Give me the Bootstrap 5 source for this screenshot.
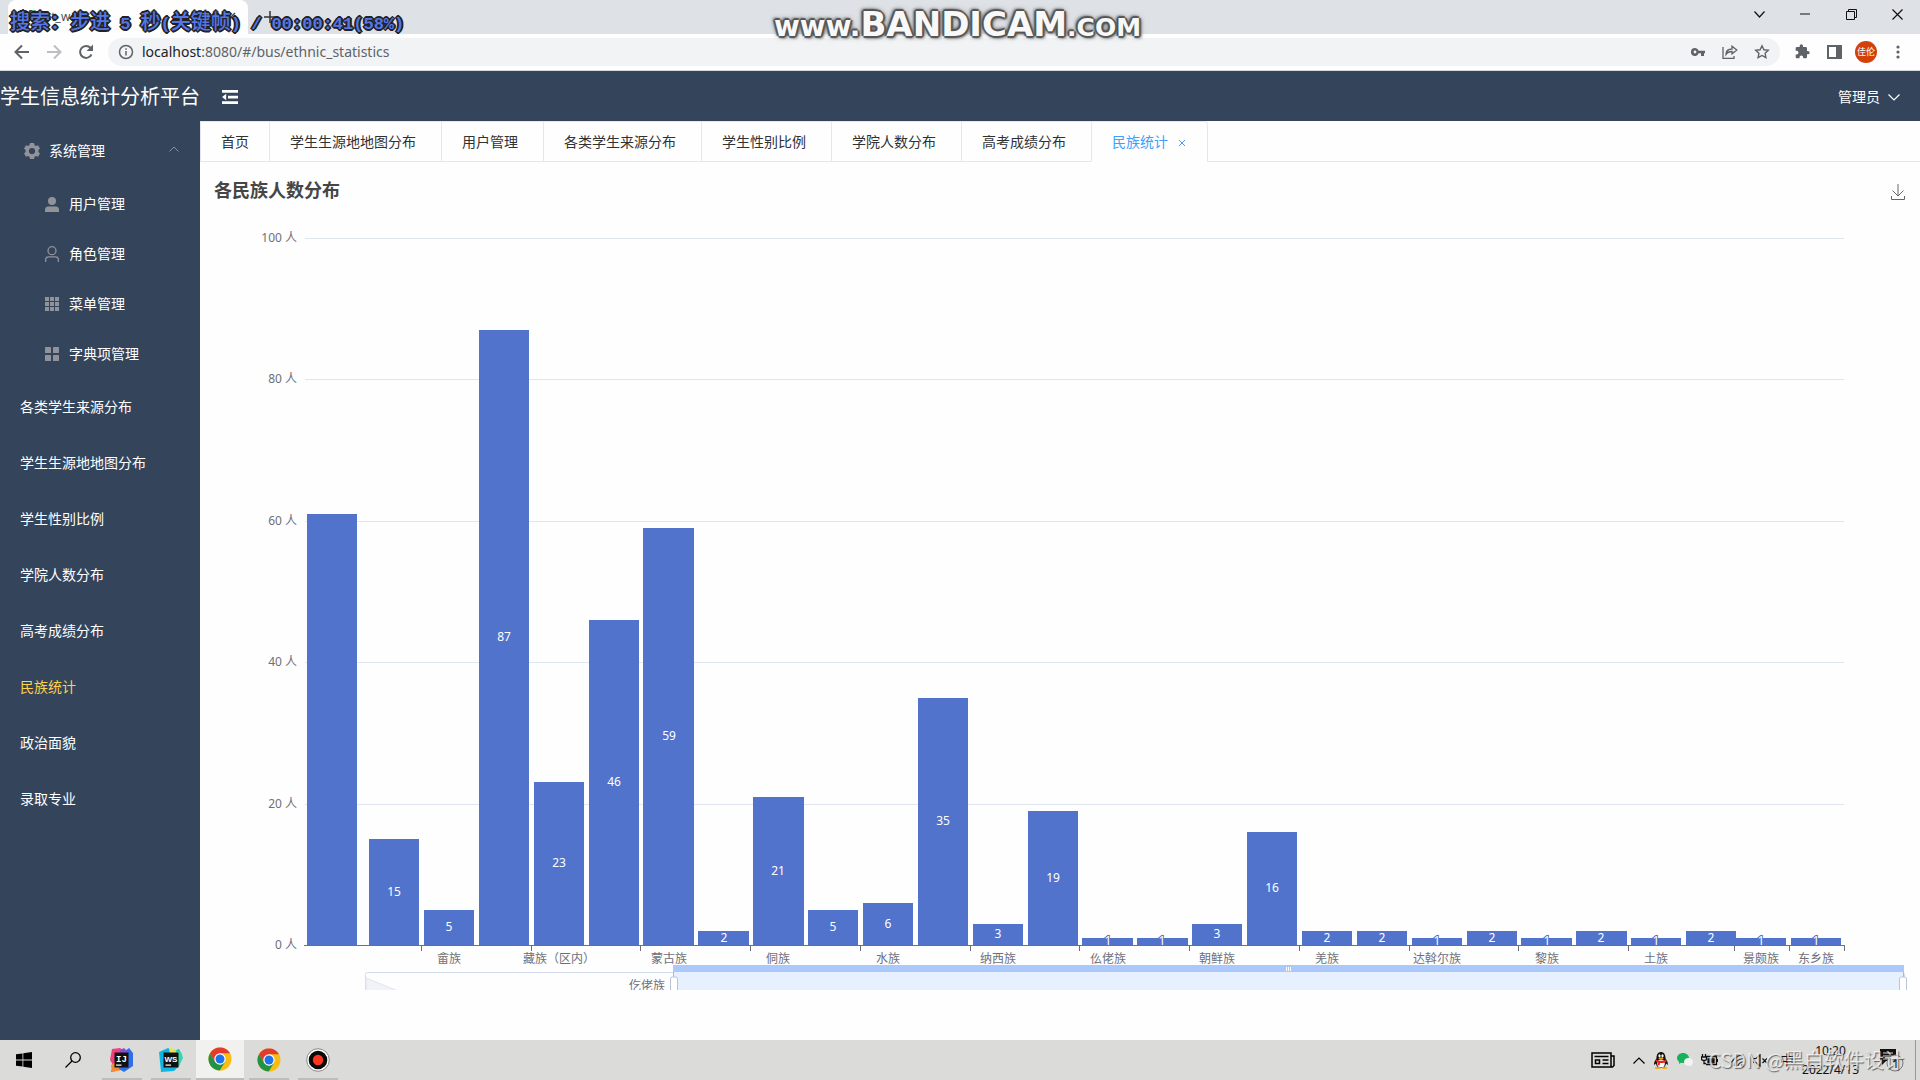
<!DOCTYPE html>
<html lang="zh-CN">
<head>
<meta charset="utf-8">
<meta name="viewport" content="width=device-width, initial-scale=1">
<title>学生信息统计分析平台</title>
<link href="https://cdn.jsdelivr.net/npm/bootstrap@5.3.0/dist/css/bootstrap.min.css" rel="stylesheet">
<style>
body{font-family:"Open Sans","Noto Sans CJK SC",sans-serif;font-size:14px;line-height:20px;background:#fefefe;color:#303133}
svg{display:block;flex:none}
button{background:none;border:0;padding:0;color:inherit}
a{color:inherit;text-decoration:none}
.titlebar{height:34px;background:#dee1e6}
.browser-tab{width:240px;margin-left:8px;background:#fefefe;border-radius:8px 8px 0 0;padding:0 12px;font-size:12px;color:#45494d}
.win-btn{width:46px;height:28px;color:#111}
.toolbar{height:37px;border-bottom:1px solid #d3dadd;background:#fefefe;color:#5f6368}
.tool-btn{width:32px;height:32px}
.nav-tools{padding-left:6px}
.page-tools{padding:0 6px}
.address{height:28px;border-radius:14px;background:#f1f3f4;padding:0 2px 0 10px;margin-left:6px}
.url{font-family:"Noto Sans",sans-serif;font-size:14px;color:#5f6368}
.url b{font-weight:400;color:#202124}
.avatar{width:22px;height:22px;border-radius:50%;background:#d2410c;color:#fff;font-size:9px;line-height:22px;text-align:center}
.osd{position:absolute;left:10px;top:7px;font:bold 17px/28px "Liberation Mono",monospace;color:#5577e6;white-space:pre;text-shadow:1px 1px #222,-1px 1px #222,1px -1px #222,-1px -1px #222,0 2px #222,2px 0 #222,-2px 0 #222,0 -2px #222;pointer-events:none}
.osd span{font:500 20px/28px "Noto Sans CJK SC",sans-serif}
.bandi{position:absolute;left:774px;top:6px;height:36px;font:bold 28px/36px "DejaVu Sans",sans-serif;color:#f8f8f8;text-shadow:2px 0 1px #555,-2px 0 1px #555,0 2px 1px #555,0 -2px 1px #555,1px 1px #555,-1px -1px #555,2px 2px 3px #666,-2px -2px 3px #777,0 0 6px #777;pointer-events:none;white-space:nowrap}
.bandi .big{font-size:34px}
.bandi .sm{font-size:25px}
.app-header{height:50px;background:#34445a;color:#fff;padding-top:2px}
.brand{width:200px;font-size:20px;line-height:30px;white-space:nowrap}
.fold{margin-left:22px}
.side{width:200px;background:#34445a;color:#fff;padding-top:2px}
.side a,.side .sub-title{display:flex;align-items:center;height:56px;padding:0 20px;width:100%;text-align:left}
.side .sub a{height:50px;padding-left:40px}
.side .ico{width:24px;margin-right:5px;display:flex;justify-content:center;color:#909399}
.side a.current{color:#ffd04b}
.tabs{height:41px}
.tabs a{border-left:1px solid #e4e7ed;border-top:1px solid #e4e7ed;border-bottom:1px solid #e4e7ed;padding:0 25px 0 20px;height:41px;line-height:40px;white-space:nowrap}
.tabs a:first-child{padding-right:20px}
.tabs a.current{color:#409eff;border-right:1px solid #e4e7ed;border-bottom-color:#fefefe;border-radius:0 4px 0 0;padding-right:18px;display:flex;align-items:center;gap:7px}
.tabs .rest{border-bottom:1px solid #e4e7ed}
.chart-head{height:58px;padding:15px 15px 0 14px}
.chart-title{font-size:18px;line-height:26px;font-weight:700;color:#464646;margin:0}
.save{padding-top:7px}
#chart{height:820px;width:100%}
#chart text{font-family:"Noto Sans","Noto Sans CJK SC",sans-serif;font-size:12px}
.taskbar{height:40px;background:#dbdbda;color:#111}
.apps{gap:1px}
.task{width:48px;height:40px;display:flex;align-items:center;justify-content:center}
.task.open{background:linear-gradient(#bdbdbd,#bdbdbd) center bottom/40px 2px no-repeat}
.task.front{background:#f1f1f0;border-bottom:2px solid #bdbdbd}
.tray{padding-right:4px}
.news{margin-right:18px}
.clock{font-family:"Noto Sans",sans-serif;font-size:12px;line-height:19px;text-align:center}
.notice{margin:0 10px 0 16px}
.show-desktop{height:40px;border-left:1px solid #999}
.csdn{position:absolute;right:16px;bottom:5px;font:20px/30px "Noto Sans CJK SC",sans-serif;color:rgba(250,250,250,.75);text-shadow:1px 1px 1px rgba(60,60,60,.75);pointer-events:none;white-space:nowrap}
</style>
<script src="https://cdn.jsdelivr.net/npm/bootstrap@5.3.0/dist/js/bootstrap.bundle.min.js"></script>
</head>
<body class="vh-100 d-flex flex-column overflow-hidden position-relative">

<div class="titlebar d-flex">
  <div class="browser-tab d-flex align-items-center">
    <svg width="16" height="14" viewBox="0 0 16 14"><path d="M0 0h3.500L8 7.500 12.500 0H16L8 14z" fill="#41b883"/><path d="M3.500 0H6.500L8 2.800 9.500 0h3L8 7.500z" fill="#35495e"/></svg>
    <span class="ms-2 flex-grow-1">bt_web</span>
    <button aria-label="关闭标签页"><svg width="10" height="10" viewBox="0 0 10 10" stroke="#444" stroke-width="1.500"><path d="M1 1l8 8M9 1l-8 8"/></svg></button>
  </div>
  <button class="ms-3 text-dark" aria-label="新标签页"><svg width="12" height="12" viewBox="0 0 12 12" stroke="#333" stroke-width="1.500"><path d="M6 0v12M0 6h12"/></svg></button>
  <div class="ms-auto d-flex">
    <button class="win-btn d-flex align-items-center justify-content-center" aria-label="搜索标签页"><svg width="11" height="7" viewBox="0 0 11 7" fill="none" stroke="currentColor" stroke-width="1.200"><path d="M.5.5l5 5.500 5-5.500"/></svg></button>
    <button class="win-btn d-flex align-items-center justify-content-center" aria-label="最小化"><svg width="10" height="2" viewBox="0 0 10 2"><path d="M0 .5h10v1H0z" fill="currentColor"/></svg></button>
    <button class="win-btn d-flex align-items-center justify-content-center" aria-label="还原"><svg width="11" height="11" viewBox="0 0 11 11" fill="none" stroke="currentColor"><path d="M.5 2.500h8v8h-8zM2.500 2.500v-2h8v8h-2"/></svg></button>
    <button class="win-btn d-flex align-items-center justify-content-center" aria-label="关闭"><svg width="11" height="11" viewBox="0 0 11 11" stroke="currentColor" stroke-width="1.200"><path d="M.5.5l10 10M10.500.5l-10 10"/></svg></button>
  </div>
</div>

<div class="toolbar d-flex align-items-center">
  <div class="nav-tools d-flex">
    <button class="tool-btn d-flex align-items-center justify-content-center" aria-label="后退"><svg width="16" height="16" viewBox="0 0 16 16" fill="none" stroke="currentColor" stroke-width="2"><path d="M15 8H2M8 1.500L1.500 8 8 14.500"/></svg></button>
    <button class="tool-btn d-flex align-items-center justify-content-center" aria-label="前进"><svg width="16" height="16" viewBox="0 0 16 16" fill="none" stroke="#bcbec1" stroke-width="2"><path d="M1 8h13M8 1.500L14.500 8 8 14.500"/></svg></button>
    <button class="tool-btn d-flex align-items-center justify-content-center" aria-label="重新加载"><svg width="16" height="16" viewBox="0 0 16 16" fill="none" stroke="currentColor" stroke-width="2"><path d="M13.500 10.500A6 6 0 1 1 12.500 3.800L14 5.500"/><path d="M15 .5v6.500H8.500z" fill="currentColor" stroke="none"/></svg></button>
  </div>
  <div class="address flex-grow-1 d-flex align-items-center">
    <svg width="16" height="16" viewBox="0 0 16 16" fill="none" stroke="currentColor" stroke-width="1.500"><circle cx="8" cy="8" r="6.500"/><path d="M8 7v4.500M8 4.200v1.600"/></svg>
    <a class="url flex-grow-1 ms-2" href="#/bus/ethnic_statistics"><b>localhost</b>:8080/#/bus/ethnic_statistics</a>
    <button class="tool-btn d-flex align-items-center justify-content-center" aria-label="密码"><svg width="14" height="8" viewBox="0 0 14 8" fill="currentColor"><path fill-rule="evenodd" d="M4 0a4 4 0 0 1 3.700 2.700H14v2.600h-1V8h-3V5.300H7.700A4 4 0 1 1 4 0zm0 2.600a1.400 1.400 0 1 0 0 2.800 1.400 1.400 0 0 0 0-2.800z"/></svg></button>
    <button class="tool-btn d-flex align-items-center justify-content-center" aria-label="分享"><svg width="16" height="14" viewBox="0 0 16 14" fill="none" stroke="currentColor" stroke-width="1.300"><path d="M1 2v11.300h11V11M4 9.500C4 6 6.500 4 10 4V1.200L14.800 5 10 8.800V6.500C7 6.500 5.200 7.500 4 9.500z"/></svg></button>
    <button class="tool-btn d-flex align-items-center justify-content-center" aria-label="收藏"><svg width="16" height="16" viewBox="0 0 16 16" fill="none" stroke="currentColor" stroke-width="1.400"><path d="M8 1.800l1.900 4 4.400.5-3.200 3 .8 4.400L8 11.500l-3.900 2.200.8-4.400-3.200-3 4.400-.5z"/></svg></button>
  </div>
  <div class="page-tools d-flex align-items-center">
    <button class="tool-btn d-flex align-items-center justify-content-center" aria-label="扩展程序"><svg width="16" height="16" viewBox="0 0 24 24" fill="currentColor"><path d="M21 10.500h-1.500V6.500c0-1.100-.9-2-2-2h-4V3a2.500 2.500 0 0 0-5 0v1.500h-4c-1.100 0-2 .9-2 2v3.800H4a2.700 2.700 0 0 1 0 5.400H2.500v3.800c0 1.100.9 2 2 2h3.800V20a2.700 2.700 0 0 1 5.400 0v1.500h3.800c1.100 0 2-.9 2-2v-4H21a2.500 2.500 0 0 0 0-5z"/></svg></button>
    <button class="tool-btn d-flex align-items-center justify-content-center" aria-label="侧边栏"><svg width="15" height="14" viewBox="0 0 15 14"><path d="M1 1h13v12H1z" fill="none" stroke="currentColor" stroke-width="2"/><path d="M9 0h6v14H9z" fill="currentColor"/></svg></button>
    <button class="tool-btn d-flex align-items-center justify-content-center" aria-label="个人资料"><span class="avatar">佳伦</span></button>
    <button class="tool-btn d-flex align-items-center justify-content-center" aria-label="菜单"><svg width="4" height="14" viewBox="0 0 4 14" fill="currentColor"><circle cx="2" cy="2" r="1.600"/><circle cx="2" cy="7" r="1.600"/><circle cx="2" cy="12" r="1.600"/></svg></button>
  </div>
</div>

<header class="app-header d-flex align-items-center">
  <div class="brand">学生信息统计分析平台</div>
  <button class="fold" aria-label="折叠菜单"><svg width="16" height="14" viewBox="0 0 16 14" fill="#fff"><path d="M0 0h16v2.700H0zM6 5.700h10v2.700H6zM0 11.300h16V14H0zM0 7l4.200-3.200v6.400z"/></svg></button>
  <button class="ms-auto d-flex align-items-center gap-2 me-3" aria-haspopup="true">管理员 <svg class="me-1" width="12" height="7" viewBox="0 0 12 7" fill="none" stroke="#fff" stroke-width="1.200"><path d="M.5.5L6 6 11.500.5"/></svg></button>
</header>

<div class="d-flex flex-grow-1 overflow-hidden">
  <nav class="side flex-shrink-0" aria-label="主菜单">
    <button class="sub-title" aria-expanded="true"><span class="ico"><svg width="16" height="16" viewBox="0 0 16 16" fill="currentColor"><path fill-rule="evenodd" d="M6 0h4l.5 2.100 1.300.8 2.200-.7 2 3.400-1.600 1.500v1.800l1.600 1.500-2 3.400-2.200-.7-1.300.8L10 16H6l-.5-2.100-1.300-.8-2.200.7-2-3.400 1.600-1.500V7.100L0 5.600l2-3.400 2.200.7 1.300-.8zM8 4.900a3.100 3.100 0 1 0 0 6.200 3.100 3.100 0 0 0 0-6.200z"/></svg></span><span class="flex-grow-1">系统管理</span><svg class="mb-1" width="12" height="6" viewBox="0 0 12 6" fill="none" stroke="#8390a0"><path d="M1.500 5.500L6 1l4.500 4.500"/></svg></button>
    <div class="sub">
      <a href="#user"><span class="ico"><svg width="14" height="15" viewBox="0 0 14 15" fill="currentColor"><circle cx="7" cy="4" r="4"/><path d="M0 15v-2.500C0 10.500 1.500 9.500 3 9.500h8c1.500 0 3 1 3 3V15z"/></svg></span>用户管理</a>
      <a href="#role"><span class="ico"><svg width="14" height="16" viewBox="0 0 14 16" fill="none" stroke="currentColor" stroke-width="1.300"><circle cx="7" cy="4.700" r="4"/><path d="M.7 16v-2.500c0-1.500 1.300-2.700 2.800-2.700h7c1.500 0 2.800 1.200 2.800 2.700V16"/></svg></span>角色管理</a>
      <a href="#menu"><span class="ico"><svg width="14" height="14" viewBox="0 0 14 14" fill="currentColor"><path d="M0 0h4v4H0zM5 0h4v4H5zM10 0h4v4h-4zM0 5h4v4H0zM5 5h4v4H5zM10 5h4v4h-4zM0 10h4v4H0zM5 10h4v4H5zM10 10h4v4h-4z"/></svg></span>菜单管理</a>
      <a href="#dict"><span class="ico"><svg width="14" height="14" viewBox="0 0 14 14" fill="currentColor"><rect width="6" height="6" rx=".6"/><rect x="8" width="6" height="6" rx=".6"/><rect y="8" width="6" height="6" rx=".6"/><rect x="8" y="8" width="6" height="6" rx=".6"/></svg></span>字典项管理</a>
    </div>
    <a href="#source">各类学生来源分布</a>
    <a href="#map">学生生源地地图分布</a>
    <a href="#gender">学生性别比例</a>
    <a href="#college">学院人数分布</a>
    <a href="#score">高考成绩分布</a>
    <a href="#ethnic" class="current" aria-current="page">民族统计</a>
    <a href="#political">政治面貌</a>
    <a href="#major">录取专业</a>
  </nav>

  <main class="flex-grow-1 overflow-hidden">
    <div class="tabs d-flex">
      <a href="#home">首页</a><a href="#map">学生生源地地图分布</a><a href="#user">用户管理</a><a href="#source">各类学生来源分布</a><a href="#gender">学生性别比例</a><a href="#college">学院人数分布</a><a href="#score">高考成绩分布</a><a href="#ethnic" class="current">民族统计<svg width="14" height="14" viewBox="0 0 14 14" stroke="#409eff" fill="none"><path d="M4 5l6 6M10 5l-6 6"/></svg></a>
      <div class="rest flex-grow-1"></div>
    </div>
    <div class="chart-head d-flex justify-content-between align-items-start">
      <h1 class="chart-title">各民族人数分布</h1>
      <button class="save" aria-label="保存为图片"><svg width="14" height="16" viewBox="0 0 14 16" fill="none" stroke="#666"><path d="M7 0v12M1.500 6.500L7 12l5.500-5.500M.5 12v3.500h13V12"/></svg></button>
    </div>
    <svg id="chart" role="img" aria-label="各民族人数分布柱状图"></svg>
  </main>
</div>

<footer class="taskbar d-flex align-items-center">
  <div class="apps d-flex">
  <button class="task" aria-label="开始"><svg width="16" height="16" viewBox="0 0 16 16" fill="#000"><path d="M0 2.300L6.500 1.400v6.200H0zM7.300 1.300L16 0v7.600H7.300zM0 8.400h6.500v6.200L0 13.700zM7.300 8.400H16V16l-8.700-1.300z"/></svg></button>
  <button class="task" aria-label="搜索"><svg width="16" height="16" viewBox="0 0 16 16" fill="none" stroke="#000" stroke-width="1.300"><circle cx="10.500" cy="5.500" r="4.800"/><path d="M7 9L.5 15.500"/></svg></button>
  <button class="task open" aria-label="IntelliJ IDEA"><svg width="24" height="24" viewBox="0 0 24 24"><path d="M2 1l8-1 6 4-6 18-9 2 2-7-3-5z" fill="#f0417a"/><path d="M1 17l5-3 5 8-9 2z" fill="#f28c38"/><path d="M15 3l4-3 4 5v13l-9 6-5-3z" fill="#2f6fe8"/><path d="M10 2l4-2 4 4v5h-8z" fill="#8a4fd0"/><path d="M4.500 4.500h14v15h-14z" fill="#111"/><text x="6" y="14" font-family="Liberation Mono" font-weight="bold" font-size="9" fill="#fff">IJ</text><path d="M6 16.500h5.500v1.200H6z" fill="#fff"/></svg></button>
  <button class="task open" aria-label="WebStorm"><svg width="24" height="24" viewBox="0 0 24 24"><path d="M0 4l9-4 6 3 5-2 3 6-3 11-5 5-13 1z" fill="#12b5e0"/><path d="M17 2l5 2 2 6-4 8-6-2z" fill="#36d6b0"/><path d="M10 0l6 1 2 5h-7z" fill="#e5e750"/><path d="M4.500 4.500h15v15h-15z" fill="#111"/><text x="5.500" y="13.500" font-family="Liberation Sans" font-weight="bold" font-size="8" fill="#fff">WS</text><path d="M6.500 16.500H12v1.200H6.500z" fill="#fff"/></svg></button>
  <button class="task front" aria-label="Chrome"><svg width="24" height="24" viewBox="0 0 24 24"><g id="cr"><circle cx="12" cy="12" r="11.500" fill="#f9bc15"/><path d="M2 6.300A11.500 11.500 0 0 1 22 6.300H12L7 15z" fill="#e33b2e"/><path d="M2 6.300L7.100 15l5 2.800-3.300 5.300A11.500 11.500 0 0 1 2 6.300z" fill="#229342"/><path d="M7 15l5 2.500 5-2.600-5.300 8.600-3-.5z" fill="#229342"/><circle cx="12" cy="12" r="5.700" fill="#fff"/><circle cx="12" cy="12" r="4.500" fill="#1f73e8"/></g></svg></button>
  <button class="task open" aria-label="Chrome 第二窗口"><svg width="24" height="24" viewBox="0 0 24 24"><use href="#cr"/></svg></button>
  <button class="task open" aria-label="Bandicam"><svg width="24" height="24" viewBox="0 0 24 24"><circle cx="12" cy="12" r="11.300" fill="#fff" stroke="#888"/><circle cx="12" cy="12" r="9.300" fill="#0a0a0a"/><circle cx="12" cy="12" r="5.200" fill="#fb3521"/></svg></button>
  </div>
  <div class="tray ms-auto d-flex align-items-center">
    <svg class="news" width="24" height="16" viewBox="0 0 24 16" fill="none" stroke="#000" stroke-width="1.500"><path d="M1 1h19v14H1zM20 4h3v9.500L21.500 15H19M3.500 4.500h14M11.500 8h6M11.500 11.500h6"/><path d="M4.500 8h4v3.500h-4z"/></svg>
    <svg class="me-2" width="12" height="7" viewBox="0 0 12 7" fill="none" stroke="#000" stroke-width="1.200"><path d="M.5 6.500L6 1l5.500 5.500"/></svg>
    <svg class="me-2" width="16" height="17" viewBox="0 0 16 17"><path d="M1 13c0-4 2-5 2.500-7C3.500 2 5.500 0 8 0s4.500 2 4.500 6c.5 2 2.500 3 2.500 7l-2-1.500C12.500 15 10 16 8 16s-4.500-1-5-4.500z" fill="#111"/><ellipse cx="8" cy="11.500" rx="3.800" ry="4" fill="#fff"/><path d="M2.800 7.500c3 1.800 7.400 1.800 10.400 0l.3 2.200C11 11 9 11.200 7 11l-.4 2.400-2-.3.200-2.600-2-1z" fill="#e8231c"/><ellipse cx="6.500" cy="3.800" rx="1.100" ry="1.600" fill="#fff"/><ellipse cx="9.500" cy="3.800" rx="1.100" ry="1.600" fill="#fff"/><ellipse cx="8" cy="6.300" rx="2.600" ry=".9" fill="#f6a914"/><ellipse cx="4.500" cy="16" rx="3" ry="1" fill="#f6a914"/><ellipse cx="11.500" cy="16" rx="3" ry="1" fill="#f6a914"/></svg>
    <svg class="me-2" width="16" height="14" viewBox="0 0 16 14"><path d="M6 0c3.300 0 6 2.200 6 5s-2.700 5-6 5l-2-.3L1.800 11l.4-2A4.600 4.600 0 0 1 0 5c0-2.800 2.700-5 6-5z" fill="#16b35a"/><path d="M11.500 5c2.500 0 4.500 1.700 4.500 3.900 0 1.200-.6 2.200-1.600 3l.2 1.500-1.500-.8c-3.400.8-6.100-1.200-6.100-3.700C7 6.700 9 5 11.500 5z" fill="#f3f3f3"/></svg>
    <svg class="me-1" width="17" height="12" viewBox="0 0 17 12" fill="none" stroke="#111" stroke-width="1.300"><path d="M5 2.500h10.500v8H5M16.500 5v3M1.500 0v3M4.500 0v3M.5 3h5v2c0 2-5 2-5 0zM3 6.500v3h2"/><path d="M7 5h6v3.500H7z" fill="#111"/></svg>
    <svg class="ms-2 me-2" width="15" height="13" viewBox="0 0 15 13" fill="none" stroke="#333" stroke-width="1.100"><path d="M1 12C1 6 7 1 13.500 1M4.500 12c0-4 4-7 9-7.500M8 12c0-2 2.500-4 5.500-4.200"/><circle cx="12.500" cy="11.500" r="1" fill="#333"/></svg>
    <svg class="me-2" width="15" height="13" viewBox="0 0 15 13" fill="none" stroke="#111" stroke-width="1.200"><path d="M.5 4.500h2.500L7 1v11L3 8.500H.5zM9.500 4.500l4.500 4.500M14 4.500L9.500 9"/></svg>
    <span class="ms-1 me-1">中</span>
    <div class="clock ms-1"><div>10:20</div><div>2022/4/13</div></div>
    <button class="notice" aria-label="通知"><svg width="30" height="24" viewBox="0 0 30 24"><path d="M5 1h16v12H11l-4 4v-4H5z" fill="#111"/><path d="M8 5h10M8 8h10M8 11h6" stroke="#ddd"/><circle cx="20" cy="15" r="8" fill="#dbdbda" stroke="#777"/><text x="17" y="20" font-family="Open Sans" font-weight="bold" font-size="13" fill="#222">1</text></svg></button>
    <div class="show-desktop"></div>
  </div>
</footer>

<div class="osd"><span>搜索：步进</span> 5 <span>秒</span>(<span>关键帧</span>) / 00:00:41(58%)</div>
<div class="bandi">www.<span class="big">BANDICAM</span><span class="sm">.COM</span></div>
<div class="csdn">CSDN @黑白软件设计</div>

<script>
// Head counts of the evenly spaced bars; names sit under every second one
const values=[5,87,23,46,59,2,21,5,6,35,3,19,1,1,3,16,2,2,1,2,1,2,1,2];
const names={0:'畲族',2:'藏族（区内）',4:'蒙古族',6:'侗族',8:'水族',10:'纳西族',12:'仫佬族',14:'朝鲜族',16:'羌族',18:'达斡尔族',20:'黎族',22:'土族'};
const pitch=54.87, barW=50.3;
const bars=[[107,61,''],[169,15,'']];
values.forEach((v,i)=>bars.push([224+i*pitch,v,names[i]||'']));
bars.push([1536,1,'景颇族'],[1591,1,'东乡族']);
const ticks=[];
for(let i=0;i<12;i++)ticks.push(221+i*2*pitch);
ticks.push(1534,1589,1644);
const svg=document.getElementById('chart'), base=725, unit=7.07;
function draw(){
  const k=svg.clientWidth/1720, X=x=>Math.round(x*k);
  let s=`<defs><clipPath id="cut"><rect width="100%" height="${base+45}"/></clipPath></defs>`;
  for(let v=0;v<=100;v+=20){
    const y=Math.round(base-v*unit)+.5;
    s+=`<text x="${X(97)}" y="${y+3}" text-anchor="end" fill="#6e7079">${v} 人</text>`;
    if(v)s+=`<path d="M${X(105)} ${y}H${X(1644)}" stroke="#e0e6f1"/>`;
  }
  for(const [x,v,n] of bars){
    const h=Math.round(v*unit), c=X(x+barW/2);
    s+=`<rect x="${X(x)}" y="${base-h}" width="${X(x+barW)-X(x)}" height="${h}" fill="#5173cb"/>`;
    if(v!==61)s+=`<text x="${c}" y="${base-Math.round(h/2)+4}" text-anchor="middle" fill="#fff"${v===1?' stroke="#5173cb" stroke-width="2" paint-order="stroke"':''}>${v}</text>`;
    if(n)s+=`<text x="${c}" y="${base+18}" text-anchor="middle" fill="#6e7079">${n}</text>`;
  }
  s+=`<path d="M${X(104)} ${base+.5}H${X(1644)+1}" stroke="#6e7079"/>`;
  for(const t of ticks)s+=`<path d="M${X(t)+.5} ${base}v6" stroke="#6e7079"/>`;
  const a=X(165), b=X(473), e=X(1704), g=X(1088), t=base+20;
  s+=`<g clip-path="url(#cut)"><rect x="${a+.5}" y="${t+7.5}" width="${e-a}" height="30" rx="2" fill="none" stroke="#d2dbee"/>
  <path d="M${a+1} ${t+13}l32 13h-32z" fill="#f1f3f9" stroke="#dfe4ef"/>
  <rect x="${b}" y="${t+7}" width="${e-b}" height="30" fill="#e6f0ff"/>
  <rect x="${b}" y="${t}" width="${e-b}" height="7" fill="#abc8fb"/>
  <path d="M${b+.5} ${t+7}v5M${e-.5} ${t+7}v5" stroke="#acb8d1"/>
  <rect x="${b-2.5}" y="${t+12}" width="7" height="22" rx="2" fill="#fff" stroke="#b9c4dc"/>
  <rect x="${e-4.5}" y="${t+12}" width="7" height="22" rx="2" fill="#fff" stroke="#b9c4dc"/>
  <path d="M${g-1.5} ${t+2}v4M${g+.5} ${t+2}v4M${g+2.5} ${t+2}v4" stroke="#fff"/>
  <text x="${b-8}" y="${t+25}" text-anchor="end" fill="#6e7079">仡佬族</text></g>`;
  svg.innerHTML=s;
}
draw();
addEventListener('resize',draw);
</script>
</body>
</html>
